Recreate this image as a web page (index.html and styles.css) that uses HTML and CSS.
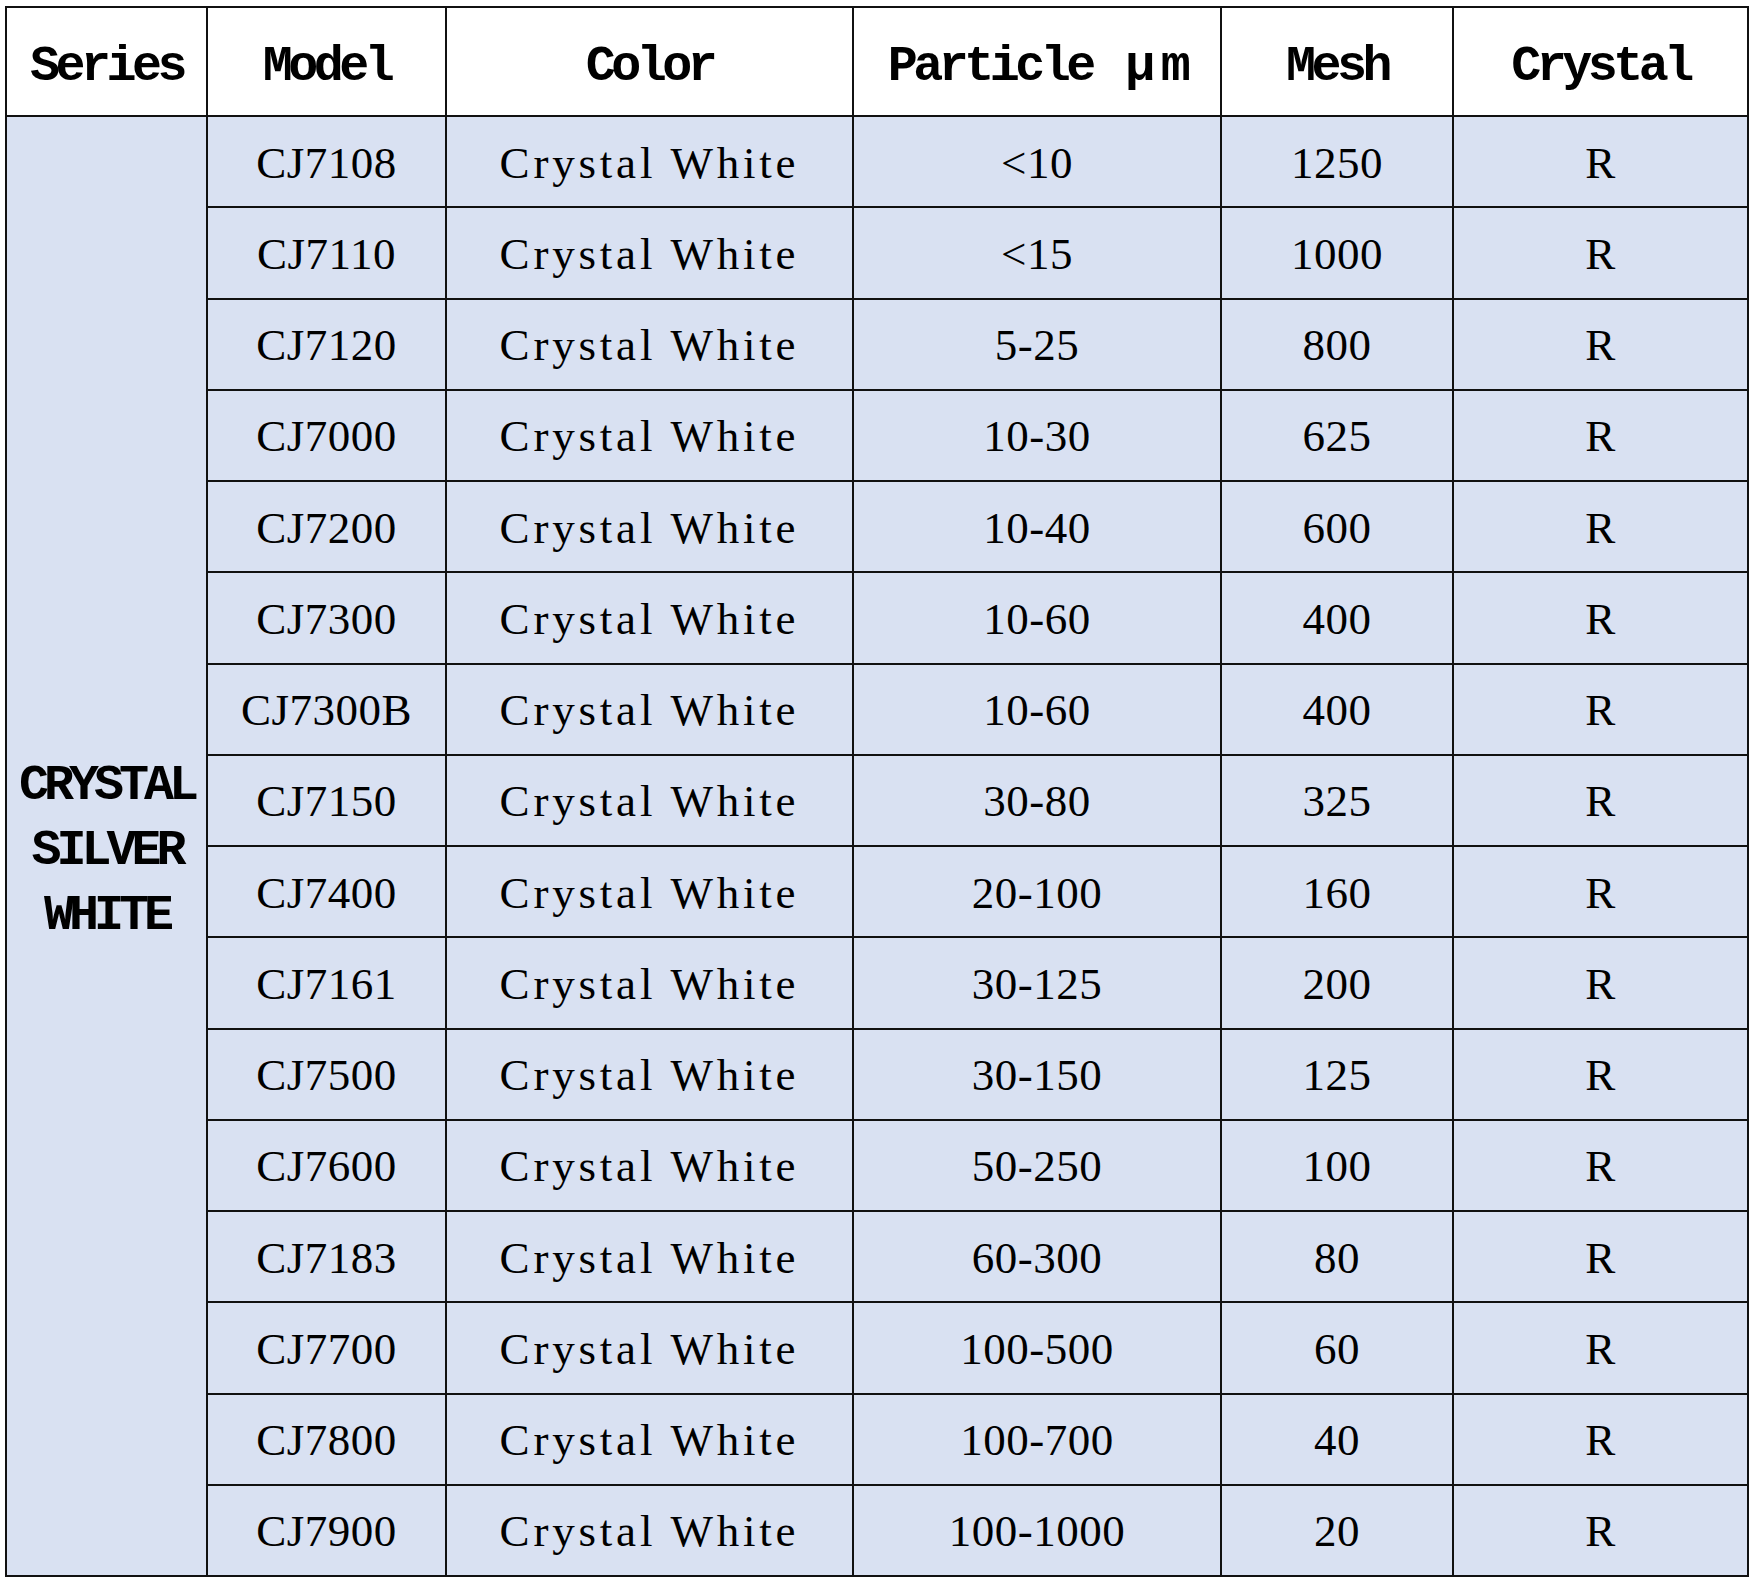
FILE: index.html
```html
<!DOCTYPE html>
<html lang="en">
<head>
<meta charset="utf-8">
<title>Crystal Silver White</title>
<link rel="stylesheet" href="styles.css">
</head>
<body>
<table class="spec">
  <colgroup>
    <col class="c-series">
    <col class="c-model">
    <col class="c-color">
    <col class="c-particle">
    <col class="c-mesh">
    <col class="c-crystal">
  </colgroup>
  <thead>
    <tr class="head-row">
      <th>Series</th>
      <th>Model</th>
      <th>Color</th>
      <th>Particle <span class="mu">μ</span>m</th>
      <th>Mesh</th>
      <th>Crystal</th>
    </tr>
  </thead>
  <tbody>
    <tr>
      <td class="series" rowspan="16">CRYSTAL<br>SILVER<br>WHITE</td>
      <td>CJ7108</td><td class="color">Crystal White</td><td>&lt;10</td><td>1250</td><td>R</td>
    </tr>
    <tr><td>CJ7110</td><td class="color">Crystal White</td><td>&lt;15</td><td>1000</td><td>R</td></tr>
    <tr><td>CJ7120</td><td class="color">Crystal White</td><td>5-25</td><td>800</td><td>R</td></tr>
    <tr><td>CJ7000</td><td class="color">Crystal White</td><td>10-30</td><td>625</td><td>R</td></tr>
    <tr><td>CJ7200</td><td class="color">Crystal White</td><td>10-40</td><td>600</td><td>R</td></tr>
    <tr><td>CJ7300</td><td class="color">Crystal White</td><td>10-60</td><td>400</td><td>R</td></tr>
    <tr><td>CJ7300B</td><td class="color">Crystal White</td><td>10-60</td><td>400</td><td>R</td></tr>
    <tr><td>CJ7150</td><td class="color">Crystal White</td><td>30-80</td><td>325</td><td>R</td></tr>
    <tr><td>CJ7400</td><td class="color">Crystal White</td><td>20-100</td><td>160</td><td>R</td></tr>
    <tr><td>CJ7161</td><td class="color">Crystal White</td><td>30-125</td><td>200</td><td>R</td></tr>
    <tr><td>CJ7500</td><td class="color">Crystal White</td><td>30-150</td><td>125</td><td>R</td></tr>
    <tr><td>CJ7600</td><td class="color">Crystal White</td><td>50-250</td><td>100</td><td>R</td></tr>
    <tr><td>CJ7183</td><td class="color">Crystal White</td><td>60-300</td><td>80</td><td>R</td></tr>
    <tr><td>CJ7700</td><td class="color">Crystal White</td><td>100-500</td><td>60</td><td>R</td></tr>
    <tr><td>CJ7800</td><td class="color">Crystal White</td><td>100-700</td><td>40</td><td>R</td></tr>
    <tr><td>CJ7900</td><td class="color">Crystal White</td><td>100-1000</td><td>20</td><td>R</td></tr>
  </tbody>
</table>
</body>
</html>
```

FILE: styles.css
```css
html, body {
  margin: 0;
  padding: 0;
  background: #ffffff;
}

body {
  padding: 6px 0 0 5px;
}

.spec {
  border-collapse: collapse;
  table-layout: fixed;
  width: 1742px;
  font-family: "Liberation Serif", "Times New Roman", serif;
  color: #000;
}

.c-series { width: 201px; }
.c-model { width: 239px; }
.c-color { width: 407px; }
.c-particle { width: 368px; }
.c-mesh { width: 232px; }
.c-crystal { width: 295px; }

.spec th,
.spec td {
  border: 2px solid #111;
  padding: 0;
  text-align: center;
  vertical-align: middle;
}

.head-row {
  height: 109px;
}

.spec th {
  background: #ffffff;
  font-family: "Liberation Mono", "DejaVu Sans Mono", monospace;
  font-weight: bold;
  font-size: 50px;
  letter-spacing: -4.5px;
  padding-top: 10px;
}

.spec th .mu {
  margin-left: 8px;
  margin-right: 10px;
}

.spec tbody tr {
  height: 91.25px;
}

.spec td {
  background: #d9e1f2;
  font-size: 45px;
  line-height: 1;
  padding-top: 3px;
  letter-spacing: 0.5px;
}

.spec td.color {
  letter-spacing: 3.8px;
}

.spec td.series {
  font-family: "Liberation Mono", "DejaVu Sans Mono", monospace;
  font-weight: bold;
  font-size: 50px;
  letter-spacing: -5px;
  line-height: 65px;
  padding-top: 8px;
}
```
